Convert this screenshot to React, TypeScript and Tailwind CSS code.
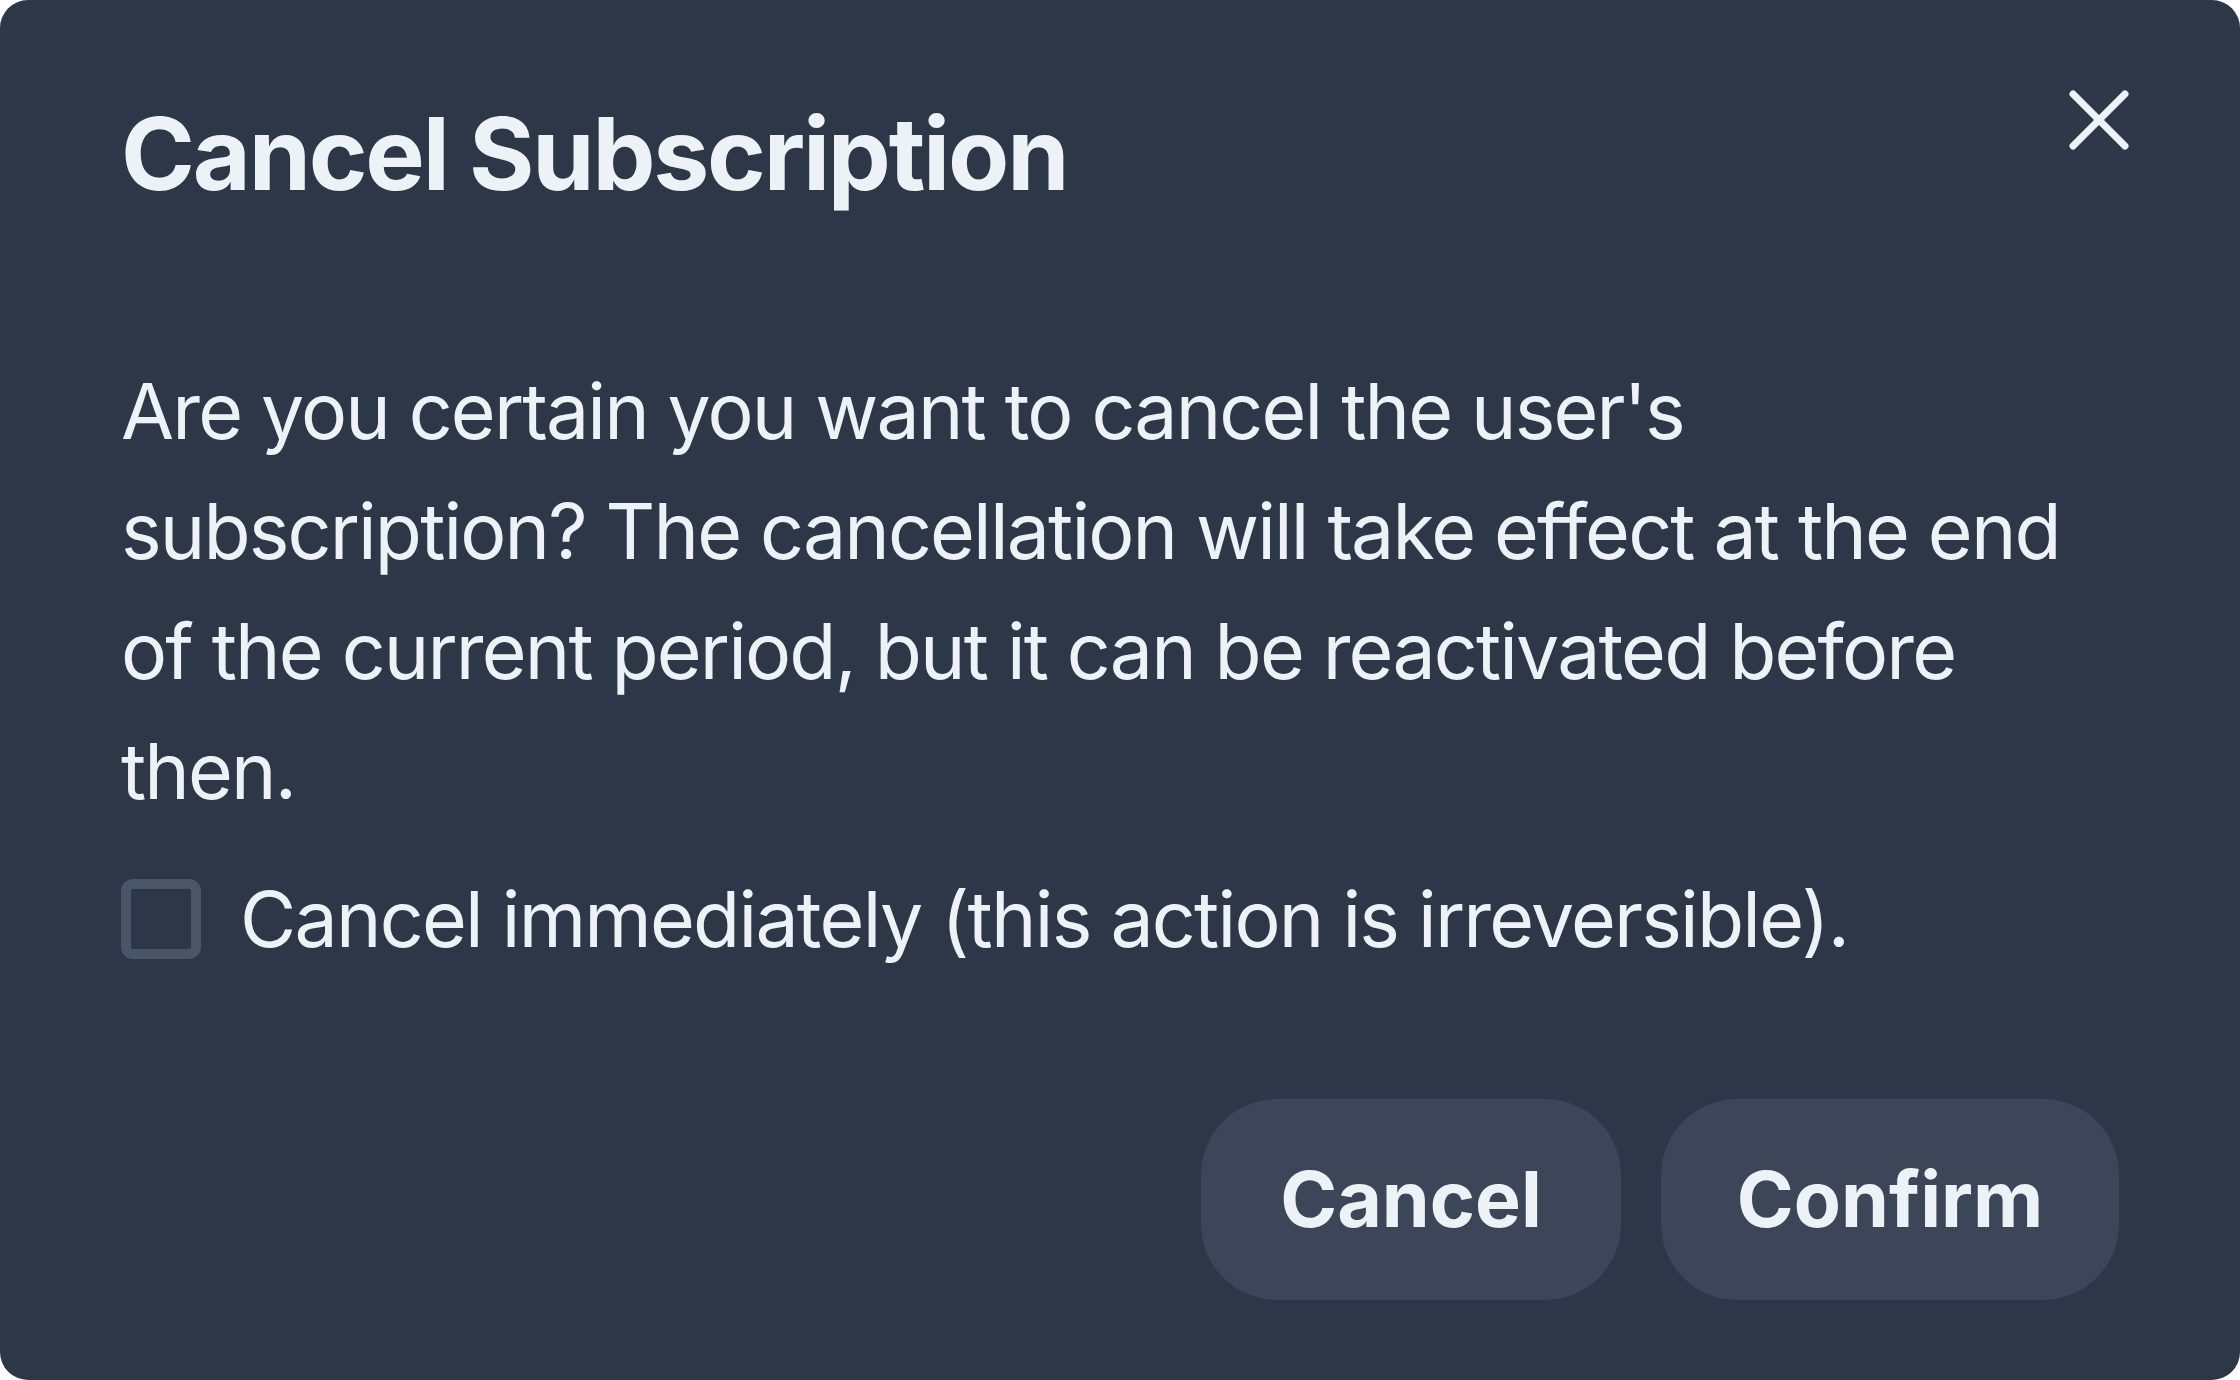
import { X } from 'lucide-react'

export default function App() {
  return (
    <div className="w-[2240px] h-[1380px] bg-white" style={{ fontFamily: 'Inter, "Noto Sans", sans-serif' }}>
      <div className="h-full rounded-[28px] bg-[#2d3748] text-[#edf2f7] flex flex-col px-[121px] pt-[104px] pb-[80px]">
        {/* Header */}
        <div className="flex items-start justify-between">
          <h2 className="text-[100px] leading-[100px] font-bold tracking-[-0.022em]">Cancel Subscription</h2>
          <button className="-mt-[36px] -mr-[32px] text-[#edf2f7]">
            <X size={104} strokeWidth={1.62} />
          </button>
        </div>

        {/* Content */}
        <p className="mt-[147px] text-[77px] leading-[120px] tracking-[-0.024em] whitespace-nowrap">
          Are you certain you want to cancel the user's
          <br />
          subscription? The cancellation will take effect at the end
          <br />
          of the current period, but it can be reactivated before
          <br />
          then.
        </p>

        <label className="mt-[28px] flex items-center gap-[39px] h-[120px]">
          <span className="w-[80px] h-[80px] shrink-0 rounded-[12px] border-[10px] border-[#4a5568]"></span>
          <span className="text-[77px] leading-[120px] tracking-[-0.023em] whitespace-nowrap">
            Cancel immediately (this action is irreversible).
          </span>
        </label>

        {/* Actions */}
        <div className="mt-auto flex justify-end gap-[40px]">
          <button className="w-[420px] h-[201px] rounded-[76px] bg-[#3c4658] text-[77px] font-bold">
            Cancel
          </button>
          <button className="w-[458px] h-[201px] rounded-[76px] bg-[#3c4658] text-[77px] font-bold">
            Confirm
          </button>
        </div>
      </div>
    </div>
  )
}
